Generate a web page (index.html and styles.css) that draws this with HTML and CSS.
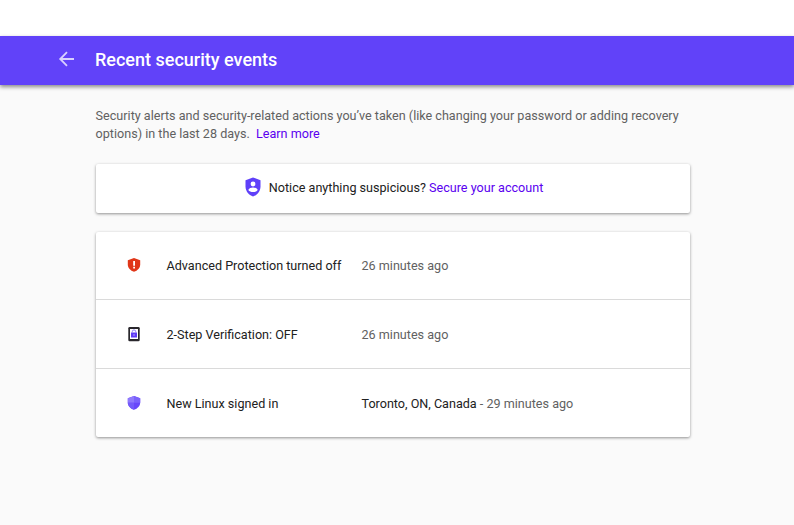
FILE: index.html
```html
<!DOCTYPE html>
<html lang="en">
<head>
<meta charset="utf-8">
<title>Recent security events</title>
<link rel="stylesheet" href="styles.css">
</head>
<body>
<header class="bar">
  <svg class="back" viewBox="0 0 20 20"><path d="M17 10H3.500M10 3.200 3.200 10l6.800 6.800"/></svg>
  <h1>Recent security events</h1>
</header>
<main>
  <p class="intro">Security alerts and security-related actions you’ve taken (like changing your password or adding recovery<br>options) in the last 28 days.&nbsp; <a href="#">Learn more</a></p>
  <section class="card notice">
    <svg class="shield-user" viewBox="0 0 16 20"><path fill="#5f40f9" d="M8 .5.500 3.300v6.200c0 4.700 3.200 8.600 7.500 10 4.300-1.400 7.500-5.300 7.500-10V3.300z"/><circle cx="8" cy="7" r="2.400" fill="#fff"/><path fill="#fff" d="M3.300 13c.4-1.700 3-2.500 4.700-2.500s4.300.8 4.700 2.500c-1 1.500-2.700 2-4.700 2s-3.700-.5-4.700-2z"/></svg>
    <p>Notice anything suspicious? <a href="#">Secure your account</a></p>
  </section>
  <section class="card events">
    <div class="row">
      <svg class="icon" viewBox="0 0 16 16"><path fill="#e03618" d="M8 1 1.800 3.200V7.500c0 3.400 2.600 6.100 6.200 7.300 3.600-1.200 6.200-3.900 6.200-7.300V3.200z"/><path fill="#fff" d="M7.200 4h1.800v4.800H7.200zm0 5.800h1.800v1.600H7.200z"/></svg>
      <span class="name">Advanced Protection turned off</span><span class="when">26 minutes ago</span>
    </div>
    <div class="row">
      <svg class="icon" viewBox="0 0 16 16"><rect x="2.300" y="1" width="11.400" height="14.300" rx="1.300" fill="#29272c"/><path fill="#fff" d="M4 3h8v10H4z"/><path fill="#5f3bf5" d="M5 6.500h6v5H5z"/><path fill="none" stroke="#8f7af7" d="M6.300 6.500V5.600a1.700 1.700 0 0 1 3.400 0v.9"/><path fill="#c9bfff" d="M7.500 8.300h1v1.400h-1z"/></svg>
      <span class="name">2-Step Verification: OFF</span><span class="when">26 minutes ago</span>
    </div>
    <div class="row">
      <svg class="icon" viewBox="0 0 16 16"><path fill="#6847fa" d="M8 1 1.800 3.200V7.500c0 3.400 2.600 6.100 6.200 7.300 3.600-1.200 6.200-3.900 6.200-7.300V3.200z"/><path fill="#8f79fc" d="M8 1 1.800 3.200v4.600H8z"/><path fill="#7b62fb" d="M8 1v6.800h6.200V3.200z"/><path fill="#735afa" d="M1.800 7.800c.2 3.300 2.800 5.900 6.200 7v-7z"/></svg>
      <span class="name">New Linux signed in</span><span class="when"><b>Toronto, ON, Canada</b> - 29 minutes ago</span>
    </div>
  </section>
</main>
</body>
</html>
```
FILE: styles.css
```css
body{margin:0;padding-top:36px;min-height:489px;background:linear-gradient(#fff 36px,#fafafa 36px);font:12.6px/18px Roboto,sans-serif;color:#616161}
.bar{height:49px;display:flex;align-items:center;padding:0 0 2px 57px;box-sizing:border-box;background:#6142f9;color:#fff;box-shadow:0 2px 4px rgba(0,0,0,.45)}
.back{width:20px;height:20px;fill:none;stroke:#d8d0fe;stroke-width:1.800;margin:0 18.500px 1px -.5px}
h1{margin:0;font-size:18px;line-height:24px;font-weight:500}
main{width:594px;margin-left:96px;padding-top:22px}
p{margin:0}
a{color:#5a00f0;text-decoration:none}
.intro{white-space:nowrap;margin:0 0 21px -.4px}
.card{background:#fff;border-radius:2px;box-shadow:0 1px 3px rgba(0,0,0,.42);margin-bottom:19px}
.notice{height:49px;display:flex;align-items:center;padding:0 0 2px 148.500px;box-sizing:border-box;color:#212121}
.shield-user{width:16px;height:20px;margin:0 8.300px 1px 0}
.events{height:205px}
.row{height:68px;display:flex;align-items:center;border-bottom:1px solid #dadada}
.row:first-child{height:67px}
.row:last-child{border-bottom:0}
.icon{width:16px;height:16px;margin:0 24.500px 1px 30px}
.row + .row .icon{margin-bottom:0}
.name{width:195px;color:#212121}
.row + .row span{padding-top:1px}
b{font-weight:400;color:#212121}
```
